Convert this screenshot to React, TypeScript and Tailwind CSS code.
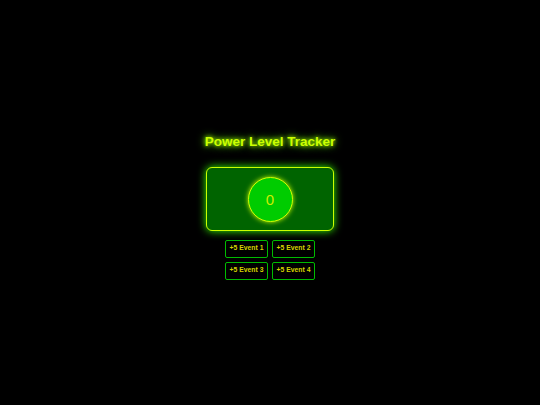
export default function App() {
  const events = [1, 2, 3, 4];

  return (
    <div className="min-h-screen w-full bg-black flex flex-col items-center justify-center font-['Liberation_Sans',Arial,sans-serif]">
      {/* Title */}
      <h1 className="text-[13.5px] leading-[16px] font-bold text-[#ccff00] [text-shadow:0_0_4px_#aaff00,0_0_8px_#66ff00] mb-[17px] mt-[8px]">
        Power Level Tracker
      </h1>

      {/* Meter panel */}
      <div className="w-[128px] h-[64px] rounded-[6px] border border-[#ccff00] bg-[#006400] shadow-[0_0_8px_#33ff00] flex items-center justify-center">
        <div className="w-[45px] h-[45px] mt-[2px] rounded-full border border-[#ccff00] bg-[#00cc00] shadow-[0_0_5px_#ccff00] flex items-center justify-center">
          <span className="text-[15px] leading-none text-[#ccee00]">0</span>
        </div>
      </div>

      {/* Event buttons */}
      <div className="grid grid-cols-2 gap-x-[4px] gap-y-[4px] mt-[9px]">
        {events.map((n) => (
          <button
            key={n}
            className="w-[43px] h-[18px] rounded-[2px] border border-[#00bb00] bg-black text-[6.8px] font-bold text-[#d4d400] flex items-center justify-center"
          >
            +5 Event {n}
          </button>
        ))}
      </div>
    </div>
  );
}
